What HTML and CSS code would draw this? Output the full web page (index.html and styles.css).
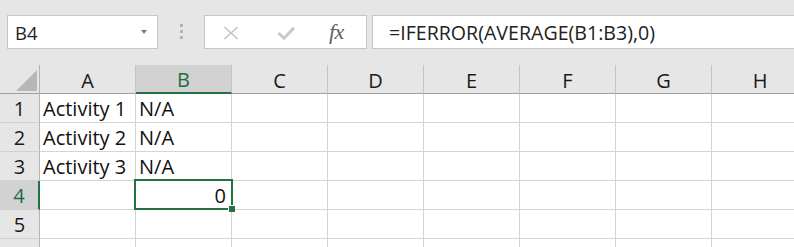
FILE: index.html
```html
<!DOCTYPE html>
<html>
<head>
<meta charset="utf-8">
<link rel="stylesheet" href="styles.css">
</head>
<body>
<div class="toolbar">
  <div class="namebox"><span class="nb-text">B4</span><span class="caret"></span></div>
  <div class="grip"><i></i><i></i><i></i></div>
  <div class="fxbox">
    <svg class="ic-x" width="16" height="14" viewBox="0 0 16 14"><path d="M1.5 1 L14.5 13 M14.5 1 L1.5 13" stroke="#c3c3c3" stroke-width="1.6" fill="none"/></svg>
    <svg class="ic-check" width="18" height="14" viewBox="0 0 18 14"><path d="M1.5 7 L7 12.2 L17 1.8" stroke="#c9c9c9" stroke-width="3" fill="none"/></svg>
    <span class="fx">fx</span>
  </div>
  <div class="formula">=IFERROR(AVERAGE(B1:B3),0)</div>
</div>
<div class="sheet">
  <div class="cell corner"><svg width="21" height="21" viewBox="0 0 21 21"><polygon points="21,0 21,21 0,21" fill="#b7b7b7"/></svg></div>
  <div class="cell hd">A</div>
  <div class="cell hd hd-sel">B</div>
  <div class="cell hd">C</div>
  <div class="cell hd">D</div>
  <div class="cell hd">E</div>
  <div class="cell hd">F</div>
  <div class="cell hd">G</div>
  <div class="cell hd last">H</div>

  <div class="cell rh">1</div>
  <div class="cell">Activity 1</div><div class="cell">N/A</div><div class="cell"></div><div class="cell"></div><div class="cell"></div><div class="cell"></div><div class="cell"></div><div class="cell last"></div>

  <div class="cell rh">2</div>
  <div class="cell">Activity 2</div><div class="cell">N/A</div><div class="cell"></div><div class="cell"></div><div class="cell"></div><div class="cell"></div><div class="cell"></div><div class="cell last"></div>

  <div class="cell rh">3</div>
  <div class="cell">Activity 3</div><div class="cell">N/A</div><div class="cell"></div><div class="cell"></div><div class="cell"></div><div class="cell"></div><div class="cell"></div><div class="cell last"></div>

  <div class="cell rh rh-sel">4</div>
  <div class="cell"></div><div class="cell num">0</div><div class="cell"></div><div class="cell"></div><div class="cell"></div><div class="cell"></div><div class="cell"></div><div class="cell last"></div>

  <div class="cell rh">5</div>
  <div class="cell"></div><div class="cell"></div><div class="cell"></div><div class="cell"></div><div class="cell"></div><div class="cell"></div><div class="cell"></div><div class="cell last"></div>

  <div class="cell rh tail"></div>
  <div class="cell tail"></div><div class="cell tail"></div><div class="cell tail"></div><div class="cell tail"></div><div class="cell tail"></div><div class="cell tail"></div><div class="cell tail"></div><div class="cell tail last"></div>

  <div class="selection"><span class="handle"></span></div>
</div>
</body>
</html>
```
FILE: styles.css
```css
html, body {
  margin: 0;
  padding: 0;
  background: #e6e6e6;
  overflow: hidden;
  width: 794px;
  height: 247px;
}

.toolbar {
  height: 65px;
  box-sizing: border-box;
  padding-top: 15px;
  display: flex;
  align-items: flex-start;
  background: #e6e6e6;
}

.namebox {
  margin-left: 7px;
  width: 151px;
  height: 34px;
  box-sizing: border-box;
  background: #fff;
  border: 1px solid #c6c6c6;
  display: flex;
  align-items: center;
  padding-left: 7px;
  font-family: "Open Sans", sans-serif;
  font-size: 18.5px;
  color: #222;
}

.caret {
  margin-left: auto;
  margin-right: 10px;
  width: 0;
  height: 0;
  border-left: 3.5px solid transparent;
  border-right: 3.5px solid transparent;
  border-top: 4px solid #7a7a7a;
}

.grip {
  width: 46px;
  display: flex;
  flex-direction: column;
  align-items: center;
  gap: 3px;
  padding-top: 9px;
}

.grip i {
  display: block;
  width: 3px;
  height: 3px;
  background: #b3b3b3;
}

.fxbox {
  width: 163px;
  height: 34px;
  box-sizing: border-box;
  background: #fff;
  border: 1px solid #c6c6c6;
  display: flex;
  align-items: center;
  padding-left: 18px;
}

.ic-x {
  margin-top: 1px;
}

.ic-check {
  margin-left: 38px;
  margin-top: 2px;
}

.fx {
  margin-left: 34px;
  font-family: "Liberation Serif", serif;
  font-style: italic;
  font-size: 22px;
  color: #5e5e5e;
  letter-spacing: -0.5px;
  margin-top: -1px;
}

.formula {
  margin-left: 5px;
  flex: 1;
  height: 34px;
  box-sizing: border-box;
  background: #fff;
  border: 1px solid #c6c6c6;
  border-right: none;
  display: flex;
  align-items: center;
  padding-left: 16px;
  font-family: "Open Sans", sans-serif;
  font-size: 19.6px;
  color: #222;
  white-space: nowrap;
}

.sheet {
  position: relative;
  display: grid;
  grid-template-columns: 40px repeat(7, 96px) 82px;
  grid-template-rows: repeat(6, 29px) 9px;
  background: #fff;
  width: 794px;
  height: 182px;
}

.cell {
  box-sizing: border-box;
  border-right: 1px solid #d4d4d4;
  border-bottom: 1px solid #d4d4d4;
  display: flex;
  align-items: center;
  padding: 1px 3px 0 3px;
  font-family: "Open Sans", sans-serif;
  font-size: 20px;
  color: #111;
  white-space: nowrap;
  background: #fff;
}

.cell.last {
  border-right: none;
}

.cell.tail {
  border-bottom: none;
}

.hd {
  background: #e6e6e6;
  border-right-color: #c4c4c4;
  border-bottom-color: #9e9e9e;
  justify-content: center;
  color: #1a1a1a;
  padding-top: 2px;
}

.hd.last {
  padding-left: 17px;
}

.hd-sel {
  background: #d2d2d2;
  border-bottom: 2px solid #217346;
  color: #1e6b41;
}

.corner {
  background: #e6e6e6;
  border-right-color: #b4b4b4;
  border-bottom-color: #9e9e9e;
  justify-content: flex-end;
  align-items: flex-end;
  padding: 0 2px 2px 0;
}

.rh {
  background: #e6e6e6;
  border-right-color: #b4b4b4;
  border-bottom-color: #d0d0d0;
  justify-content: center;
  color: #1a1a1a;
}

.rh-sel {
  background: #d2d2d2;
  border-right: 2px solid #217346;
  color: #1e6b41;
}

.num {
  justify-content: flex-end;
  padding-right: 5px;
}

.selection {
  position: absolute;
  left: 134px;
  top: 114px;
  width: 99px;
  height: 31px;
  box-sizing: border-box;
  border: 2px solid #217346;
}

.handle {
  position: absolute;
  right: -4px;
  bottom: -4px;
  width: 6px;
  height: 6px;
  background: #217346;
  border-left: 1px solid #fff;
  border-top: 1px solid #fff;
}
```
